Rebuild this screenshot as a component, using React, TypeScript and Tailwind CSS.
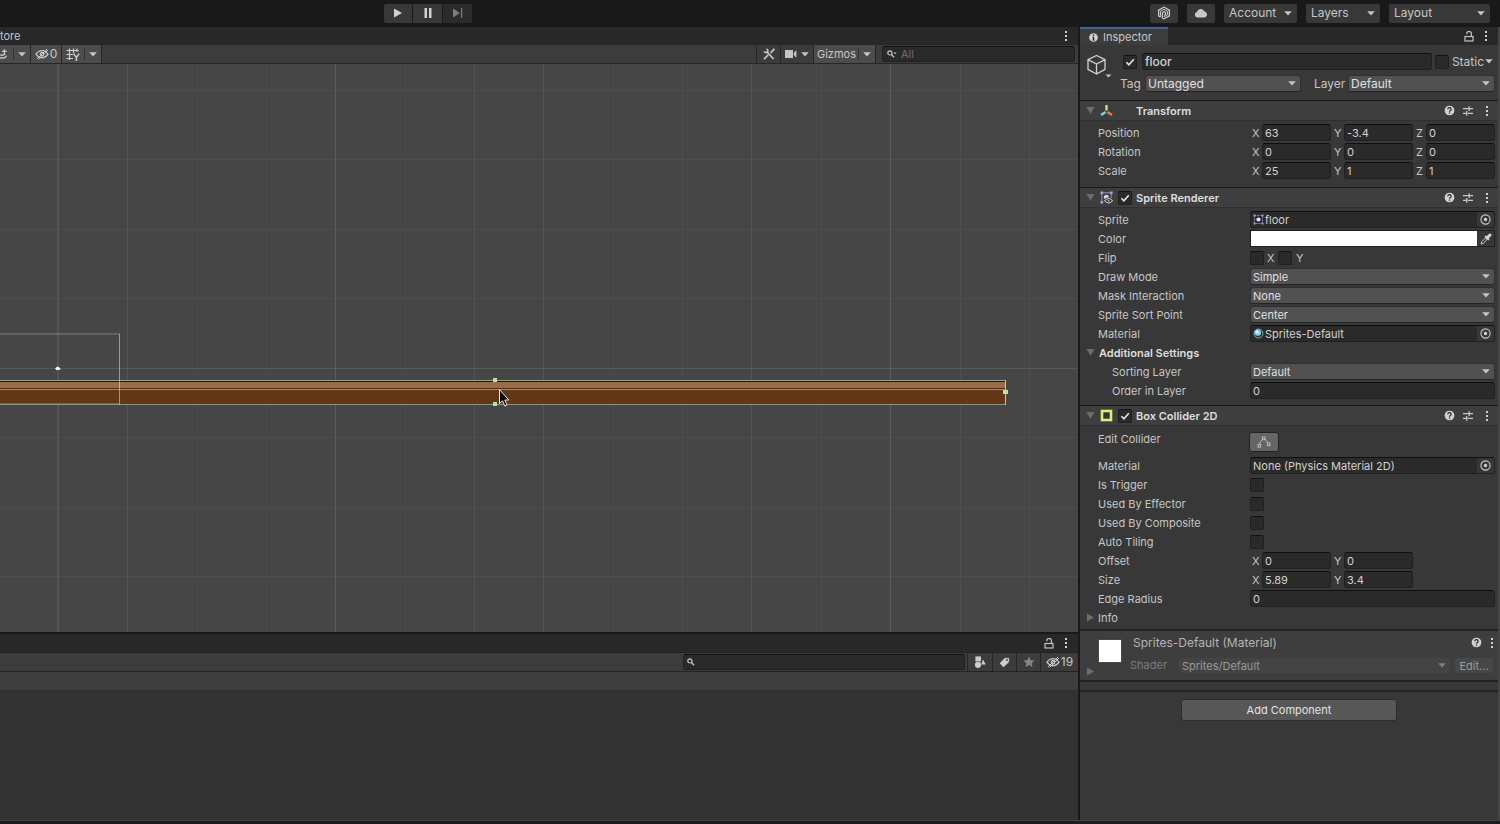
import { useId, type ReactNode } from "react";

/* ---------- icons ---------- */

function Caret({ className = "text-[#c4c4c4]" }: { className?: string }) {
  return (
    <svg viewBox="0 0 8 5" className={`h-[5px] w-2 shrink-0 ${className}`} aria-hidden="true">
      <path d="M0.2 0.2H7.8L4 4.6Z" fill="currentColor" />
    </svg>
  );
}

function Foldout({ open = true }: { open?: boolean }) {
  return (
    <svg viewBox="0 0 9 9" className="h-[9px] w-[9px] text-[#6c6c6c]" aria-hidden="true">
      <path d={open ? "M0.5 1H8.5L4.5 8Z" : "M1 0.5V8.5L8 4.5Z"} fill="currentColor" />
    </svg>
  );
}

function Kebab() {
  return (
    <svg viewBox="0 0 4 12" className="h-3 w-1 shrink-0" aria-hidden="true">
      <g fill="#d0d0d0">
        <rect x="1" y="1" width="2" height="2" />
        <rect x="1" y="5" width="2" height="2" />
        <rect x="1" y="9" width="2" height="2" />
      </g>
    </svg>
  );
}

function LockOpen() {
  return (
    <svg viewBox="0 0 10 11" className="h-[11px] w-[10px]" fill="none" stroke="#c4c4c4" aria-hidden="true">
      <rect x="1" y="5.5" width="8" height="4.5" strokeWidth="1.2" />
      <path d="M2.8 3.2V2.6A2.2 2.1 0 0 1 7.4 2.6V5.4" strokeWidth="1.2" />
    </svg>
  );
}

function Help() {
  return (
    <svg viewBox="0 0 12 12" className="h-[11px] w-[11px]" aria-hidden="true">
      <circle cx="6" cy="6" r="5.3" fill="#d2d2d2" />
      <path d="M4.2 4.8A1.8 1.7 0 1 1 6.9 6.1Q6 6.5 6 7.4" fill="none" stroke="#2f2f2f" strokeWidth="1.4" />
      <rect x="5.3" y="8.2" width="1.4" height="1.4" fill="#2f2f2f" />
    </svg>
  );
}

function Presets() {
  return (
    <svg viewBox="0 0 12 12" className="h-3 w-3" stroke="#c8c8c8" strokeWidth="1.3" fill="none" aria-hidden="true">
      <path d="M1 3.6H7M7.2 1.2V6M7.2 3.6H11M1 8.4H4.6M4.8 6V10.8M6 8.4H11" />
    </svg>
  );
}

function Target() {
  return (
    <svg viewBox="0 0 12 12" className="h-[11px] w-[11px]" aria-hidden="true">
      <circle cx="6" cy="6" r="5" fill="none" stroke="#c8c8c8" strokeWidth="1.2" />
      <circle cx="6" cy="6" r="1.8" fill="#d0d0d0" />
    </svg>
  );
}

function EyeSlash() {
  return (
    <svg viewBox="0 0 14 12" className="h-3 w-[14px]" fill="none" stroke="#c4c4c4" strokeWidth="1.3" aria-hidden="true">
      <path d="M1 6.2Q3.5 2.6 7 2.6T13 6.2Q10.5 9.8 7 9.8T1 6.2Z" />
      <circle cx="7" cy="6.2" r="1.7" />
      <path d="M2 11L12 1M3.6 11.4L13 2" strokeWidth="1" />
    </svg>
  );
}

function Magnifier({ menu = false }: { menu?: boolean }) {
  return (
    <svg viewBox="0 0 10 8" className="h-2 w-[10px] shrink-0" fill="none" stroke="#c8c8c8" aria-hidden="true">
      <circle cx="2.9" cy="2.9" r="2.1" strokeWidth="1.2" />
      <path d="M4.5 4.5L7 7.2" strokeWidth="1.4" />
      {menu && <path d="M6.6 2.4H9.6L8.1 4.2Z" fill="#c8c8c8" stroke="none" />}
    </svg>
  );
}

/* ---------- controls ---------- */

const fieldBase =
  "h-[17px] min-w-0 rounded-[3px] border border-[#202020] border-t-[#0f0f0f] bg-[#2a2a2a] text-[#d2d2d2] outline-none";

function TextField({ value, label, id, className = "" }: { value: string; label?: string; id?: string; className?: string }) {
  return <input id={id} type="text" aria-label={label} defaultValue={value} className={`${fieldBase} px-[2px] ${className}`} />;
}

function Tick({ label, id, checked = false }: { label?: string; id?: string; checked?: boolean }) {
  return (
    <span className="grid h-[14px] w-[14px] shrink-0">
      <input
        id={id}
        type="checkbox"
        aria-label={label}
        defaultChecked={checked}
        className="peer col-start-1 row-start-1 h-[14px] w-[14px] appearance-none rounded-[2px] border border-[#202020] border-t-[#121212] bg-[#2a2a2a]"
      />
      <svg
        viewBox="0 0 14 14"
        className="pointer-events-none invisible col-start-1 row-start-1 h-[14px] w-[14px] peer-checked:visible"
        aria-hidden="true"
      >
        <path d="M3.4 7.2L5.9 9.8L10.8 4.2" fill="none" stroke="#e6e6e6" strokeWidth="1.6" />
      </svg>
    </span>
  );
}

function Dropdown({ value, id, label, className = "" }: { value: string; id?: string; label?: string; className?: string }) {
  return (
    <span className={`grid h-[17px] min-w-0 items-center ${className}`}>
      <select
        id={id}
        aria-label={label}
        defaultValue={value}
        className="col-start-1 row-start-1 h-[17px] w-full appearance-none rounded-[3px] border border-[#303030] border-b-[#242424] bg-[#515151] pr-4 pl-[2px] text-[#e0e0e0] outline-none"
      >
        <option>{value}</option>
      </select>
      <span className="pointer-events-none col-start-1 row-start-1 justify-self-end pr-[5px]">
        <Caret />
      </span>
    </span>
  );
}

function ObjectField({ value, icon, id }: { value: string; icon?: ReactNode; id: string }) {
  return (
    <div className={`${fieldBase} flex flex-1 items-center overflow-hidden`}>
      <button id={id} type="button" className="flex min-w-0 flex-1 items-center gap-px pl-[2px] text-left">
        {icon}
        {value}
      </button>
      <button type="button" aria-label="Select object" className="flex h-full w-[17px] items-center justify-center bg-[#373737]">
        <Target />
      </button>
    </div>
  );
}

/* ---------- inspector rows ---------- */

function Row({ label, indent = false, children }: { label: string; indent?: boolean; children: (id: string) => ReactNode }) {
  const id = useId();
  return (
    <div className="flex h-[19px] items-center pr-[3px] pl-[18px]">
      <label htmlFor={id} className={`w-[152px] shrink-0 ${indent ? "pl-[14px]" : ""}`}>
        {label}
      </label>
      {children(id)}
    </div>
  );
}

function VectorRow({ label, values }: { label: string; values: string[] }) {
  return (
    <Row label={label}>
      {(id) => (
        <div className="grid flex-1 grid-cols-3 gap-x-px">
          {values.map((v, i) => (
            <span key={i} className="flex items-center">
              <label htmlFor={i === 0 ? id : `${id}${i}`} className="w-3 shrink-0 pl-[2px]">
                {"XYZ"[i]}
              </label>
              <TextField id={i === 0 ? id : `${id}${i}`} label={`${label} ${"XYZ"[i]}`} value={v} className="flex-1" />
            </span>
          ))}
        </div>
      )}
    </Row>
  );
}

function SectionHeader({ title, icon, toggle = false }: { title: string; icon: ReactNode; toggle?: boolean }) {
  return (
    <header className="flex h-[21px] items-center border-t border-b border-t-[#1a1a1a] border-b-[#303030] bg-[#3e3e3e] pl-[6px]">
      <button type="button" aria-label={`Collapse ${title}`} className="w-[14px]">
        <Foldout />
      </button>
      <span className="flex w-[18px] items-center">{icon}</span>
      <span className="w-[18px]">{toggle && <Tick checked label={`Enable ${title}`} />}</span>
      <h2 className="flex-1 font-semibold text-[#dedede]">{title}</h2>
      <div className="flex items-center gap-[7px] pr-[9px]">
        <button type="button" aria-label="Help">
          <Help />
        </button>
        <button type="button" aria-label="Presets">
          <Presets />
        </button>
        <button type="button" aria-label="More" className="pl-1">
          <Kebab />
        </button>
      </div>
    </header>
  );
}

/* ---------- component icons ---------- */

const transformIcon = (
  <svg viewBox="0 0 13 13" className="h-[13px] w-[13px]" fill="none" strokeWidth="2" aria-hidden="true">
    <path d="M6.5 1V6.5" stroke="#c8e668" strokeWidth="2.4" />
    <path d="M5.6 8L1 11" stroke="#7ad0ee" strokeWidth="2.6" />
    <path d="M7.4 8L12 11" stroke="#ee7848" strokeWidth="2.6" />
  </svg>
);

const spriteRendererIcon = (
  <svg viewBox="0 0 13 13" className="h-[13px] w-[13px]" aria-hidden="true">
    <path d="M1.8 11V1.8H11.2V7" fill="none" stroke="#a08ccc" />
    <g fill="#b49ce8">
      <rect x="0.5" y="0.5" width="2.6" height="2.6" />
      <rect x="10" y="0.5" width="2.6" height="2.6" />
      <rect x="0.5" y="10" width="2.6" height="2.6" />
    </g>
    <path d="M4.4 8A2.6 2.6 0 1 1 9 6.2Q6 6.2 4.4 8Z" fill="#dcdcdc" />
    <path d="M4.6 9.8Q6.4 7.6 8.6 7.6T12.6 9.8Q10.8 12 8.6 12T4.6 9.8Z" fill="#3e3e3e" stroke="#dcdcdc" />
    <circle cx="8.6" cy="9.8" r="0.8" fill="#dcdcdc" />
  </svg>
);

const colliderIcon = (
  <svg viewBox="0 0 13 13" className="h-[13px] w-[13px]" aria-hidden="true">
    <rect x="2" y="2" width="9" height="9" fill="#353535" stroke="#d0f474" strokeWidth="2.6" />
  </svg>
);

const spriteIcon = (
  <svg viewBox="0 0 11 11" className="h-[11px] w-[11px] shrink-0" aria-hidden="true">
    <rect x="1.5" y="1.5" width="8" height="8" fill="none" stroke="#8c7cc0" strokeDasharray="2 1" />
    <g fill="#a894e0">
      <rect x="0.5" y="0.5" width="2" height="2" />
      <rect x="8.5" y="0.5" width="2" height="2" />
      <rect x="0.5" y="8.5" width="2" height="2" />
      <rect x="8.5" y="8.5" width="2" height="2" />
    </g>
    <circle cx="5.5" cy="5.5" r="2.1" fill="#e6e6e6" />
  </svg>
);

const materialIcon = (
  <svg viewBox="0 0 11 11" className="h-[11px] w-[11px] shrink-0" aria-hidden="true">
    <circle cx="5.5" cy="5.5" r="4.5" fill="#1f3c48" stroke="#8fc8dc" strokeWidth="0.8" />
    <circle cx="4.8" cy="4.6" r="3.2" fill="#90d0ee" />
    <circle cx="4" cy="3.8" r="1.4" fill="#e4f6fc" />
  </svg>
);

/* ---------- top bar ---------- */

function TopMenu({ label, className }: { label: string; className: string }) {
  return (
    <button type="button" className={`flex h-[19px] items-center justify-between rounded-[2px] bg-[#383838] px-[5px] ${className}`}>
      {label}
      <Caret />
    </button>
  );
}

function TopBar() {
  return (
    <header className="flex h-[26px] shrink-0 items-center justify-between bg-[#191919] pr-[10px] pl-[384px] text-[12px]">
      <div className="flex gap-px">
        <button type="button" aria-label="Play" className="flex h-[19px] w-[28px] items-center justify-center rounded-l-[2px] bg-[#383838]">
          <svg viewBox="0 0 10 10" className="h-[10px] w-[10px]" aria-hidden="true">
            <path d="M1 0.5L9 5L1 9.5Z" fill="#d2d2d2" />
          </svg>
        </button>
        <button type="button" aria-label="Pause" className="flex h-[19px] w-[29px] items-center justify-center bg-[#383838]">
          <svg viewBox="0 0 8 10" className="h-[10px] w-2" aria-hidden="true">
            <path d="M0.5 0H3V10H0.5ZM5 0H7.5V10H5Z" fill="#d2d2d2" />
          </svg>
        </button>
        <button type="button" aria-label="Step" className="flex h-[19px] w-[29px] items-center justify-center rounded-r-[2px] bg-[#2b2b2b]">
          <svg viewBox="0 0 11 10" className="h-[10px] w-[11px]" aria-hidden="true">
            <path d="M1 0.5L8 5L1 9.5ZM9 0H10.2V10H9Z" fill="#7c7c7c" />
          </svg>
        </button>
      </div>
      <div className="flex gap-[9px]">
        <button type="button" aria-label="Collaborate" className="flex h-[19px] w-[28px] items-center justify-center rounded-[2px] bg-[#383838]">
          <svg viewBox="0 0 14 14" className="h-[14px] w-[14px]" fill="none" stroke="#d0d0d0" strokeWidth="1.2" aria-hidden="true">
            <path d="M3.4 11L1.6 10V4.2L7 1.1L12.4 4.2V9.8L7 12.9L5.4 12V6.6L7 5.7L8.6 6.6V8.4L7 9.3" />
            <path d="M3.4 11V5.3L7 3.3L10.6 5.3V8.8L7 10.9" strokeWidth="1" />
          </svg>
        </button>
        <button type="button" aria-label="Services" className="flex h-[19px] w-[28px] items-center justify-center rounded-[2px] bg-[#383838]">
          <svg viewBox="0 0 14 10" className="h-[10px] w-[14px]" aria-hidden="true">
            <path d="M3.3 9.6A2.9 2.9 0 0 1 2.8 4A4 4 0 0 1 10.2 3.2A3.3 3.3 0 0 1 10.8 9.6Z" fill="#c8c8c8" />
          </svg>
        </button>
        <TopMenu label="Account" className="w-[73px]" />
        <TopMenu label="Layers" className="w-[74px]" />
        <TopMenu label="Layout" className="w-[101px]" />
      </div>
    </header>
  );
}

/* ---------- scene ---------- */

const gridX = [
  { x: 57, o: 0.08, w: 2 },
  { x: 127, o: 0.08, w: 1 },
  { x: 197, o: 0.03, w: 1 },
  { x: 266, o: 0.03, w: 1 },
  { x: 335, o: 0.12, w: 1 },
  { x: 405, o: 0.03, w: 1 },
  { x: 474, o: 0.08, w: 1 },
  { x: 543, o: 0.08, w: 1 },
  { x: 613, o: 0.03, w: 1 },
  { x: 682, o: 0.04, w: 1 },
  { x: 751, o: 0.08, w: 1 },
  { x: 821, o: 0.04, w: 1 },
  { x: 890, o: 0.12, w: 1 },
  { x: 960, o: 0.06, w: 1 },
  { x: 1029, o: 0.04, w: 1 },
];
const gridY = [26, 95, 165, 234, 304, 373, 443, 512];

function SceneView() {
  return (
    <div className="flex min-h-[400px] flex-1 bg-[#464646]">
      <svg className="block min-w-0 flex-1" role="img" aria-label="Scene view">
        {gridX.map((g) => (
          <rect key={g.x} x={g.x} y="0" width={g.w} height="100%" fill="#fff" opacity={g.o} />
        ))}
        {gridY.map((y) => (
          <rect key={y} x="0" y={y} width="100%" height="1" fill="#fff" opacity={y === 304 ? 0.1 : 0.04} />
        ))}
        <rect x="0" y="316" width="1006" height="24" fill="#633616" />
        <rect x="0" y="316" width="1006" height="1" fill="#90ae7c" />
        <rect x="0" y="317" width="1005" height="1" fill="#1c130c" />
        <rect x="0" y="318" width="1005" height="6" fill="#986d4a" />
        <rect x="0" y="324" width="1005" height="1" fill="#4e2810" />
        <rect x="0" y="325" width="1005" height="1" fill="#b08a58" />
        <rect x="0" y="340" width="1006" height="1" fill="#83978a" />
        <rect x="1005" y="316" width="1" height="25" fill="#c8c8b8" />
        <rect x="0" y="269" width="120" height="2" fill="#fff" opacity="0.16" />
        <rect x="119" y="270" width="1" height="71" fill="#fff" opacity="0.45" />
        <rect x="0" y="339" width="120" height="1" fill="#a08860" opacity="0.5" />
        <path d="M55 304.6L57.6 302.6L60.6 304.6L59.4 306H56.6Z" fill="#fff" />
        <g fill="#b4e69a">
          <rect x="493" y="314" width="4" height="4" />
          <rect x="493" y="338" width="4" height="4" />
          <rect x="1003" y="326" width="5" height="4" />
        </g>
        <path
          d="M499.5 325.5V339.5L502.5 336.8L504.8 342L507 341L504.8 336H508.8Z"
          fill="#0a0a0a"
          stroke="#e6e6e6"
          strokeWidth="1"
        />
      </svg>
    </div>
  );
}

function SceneToolbar() {
  return (
    <div className="flex h-[20px] shrink-0 items-stretch justify-between border-t border-b border-[#262626] bg-[#3c3c3c]">
      <div className="flex gap-px bg-[#262626] pr-px">
        <button type="button" aria-label="Audio and effects" className="flex w-[30px] items-center justify-between bg-[#4c4c4c] pr-1">
          <svg viewBox="0 0 8 12" className="h-3 w-2" fill="none" stroke="#c8c8c8" strokeWidth="1.4" aria-hidden="true">
            <path d="M0 9.8Q5.6 10.8 6.4 7.6M0 6.8Q3 8 5 6M4.4 1.2V6M2 3.4H6.8" />
          </svg>
          <span className="flex h-3 items-center border-l border-[#333] pl-1">
            <Caret />
          </span>
        </button>
        <button type="button" aria-label="Hidden objects: 0" className="flex w-[30px] items-center justify-center gap-px bg-[#4c4c4c] text-[12px]">
          <EyeSlash />0
        </button>
        <button type="button" aria-label="Grid visibility" className="flex w-[39px] items-center justify-between bg-[#4c4c4c] pr-1 pl-1">
          <svg viewBox="0 0 14 13" className="h-[13px] w-[14px]" fill="none" stroke="#cccccc" strokeWidth="1.2" aria-hidden="true">
            <path d="M0.5 2.5H12.5M0.5 6.5H7M0.5 10.5H7M3.5 0.5V12M7.5 0.5V5M11 0.5V4" />
            <path d="M7.6 5.6L10.4 9.4L13.2 5.6M10.4 9.4V13" strokeWidth="1.5" />
          </svg>
          <span className="flex h-3 items-center border-l border-[#333] pl-1">
            <Caret />
          </span>
        </button>
      </div>
      <div className="flex items-stretch">
        <button type="button" aria-label="Component tools" className="flex w-6 items-center justify-center border-l border-[#262626]">
          <svg viewBox="0 0 12 12" className="h-3 w-3" fill="none" stroke="#c8c8c8" aria-hidden="true">
            <path d="M3.4 3.4L10.6 11" strokeWidth="1.8" />
            <path d="M1 3.4A2.4 2.4 0 0 0 4.8 3.8A2.4 2.4 0 0 0 3.4 0.8" strokeWidth="1.4" />
            <path d="M11.4 0.8L7.6 4.8M5 7L1 11.2" strokeWidth="1.8" />
          </svg>
        </button>
        <button type="button" aria-label="Camera" className="flex w-[33px] items-center justify-center gap-1 border-l border-[#262626]">
          <svg viewBox="0 0 12 10" className="h-[10px] w-3" aria-hidden="true">
            <path d="M0 1H8V9H0ZM8.8 4L11.4 1.2V8.8L8.8 6Z" fill="#c4c4c4" />
          </svg>
          <Caret />
        </button>
        <button type="button" className="flex w-[63px] items-center justify-between border-r border-l border-[#262626] bg-[#4c4c4c] pr-1 pl-[3px]">
          Gizmos
          <span className="flex h-3 items-center border-l border-[#333] pl-1">
            <Caret />
          </span>
        </button>
        <label className="my-px mr-[3px] ml-[6px] flex w-[193px] items-center rounded-[3px] border border-[#202020] border-t-[#0f0f0f] bg-[#2a2a2a] pl-1">
          <Magnifier menu />
          <input type="search" aria-label="Search scene" placeholder="All" className="min-w-0 flex-1 bg-transparent pl-1 outline-none placeholder:text-[#6e6e6e]" />
        </label>
      </div>
    </div>
  );
}

function ProjectPanel() {
  return (
    <section aria-label="Project" className="flex h-[188px] shrink-0 flex-col border-t-2 border-[#191919] bg-[#333333]">
      <div className="flex h-[18px] shrink-0 items-center justify-end gap-[10px] bg-[#282828] pr-[10px]">
        <button type="button" aria-label="Lock">
          <LockOpen />
        </button>
        <button type="button" aria-label="More">
          <Kebab />
        </button>
      </div>
      <div className="flex h-[20px] shrink-0 justify-end border-t border-b border-[#232323] bg-[#3c3c3c]">
        <label className="my-px mr-[2px] flex w-[282px] items-center rounded-[3px] border border-[#202020] border-t-[#0f0f0f] bg-[#2a2a2a] pl-[3px]">
          <Magnifier />
          <input type="search" aria-label="Search project" className="min-w-0 flex-1 bg-transparent outline-none" />
        </label>
        <button type="button" aria-label="Search by type" className="flex w-[25px] items-center justify-center border-l border-[#262626]">
          <svg viewBox="0 0 12 12" className="h-3 w-3" fill="#cccccc" aria-hidden="true">
            <rect x="1.4" y="0.4" width="5.6" height="5" />
            <circle cx="4" cy="8.8" r="3.1" />
            <path d="M9 3.4L11.8 8.4H7.2Z" />
          </svg>
        </button>
        <button type="button" aria-label="Search by label" className="flex w-6 items-center justify-center border-l border-[#262626]">
          <svg viewBox="0 0 11 11" className="h-[11px] w-[11px]" aria-hidden="true">
            <path d="M6 1.4H9.6V5L4.4 9.8L1.2 6.2Z" fill="#d0d0d0" stroke="#d0d0d0" strokeLinejoin="round" />
            <circle cx="8" cy="3" r="0.9" fill="#3c3c3c" />
          </svg>
        </button>
        <button type="button" aria-label="Favorites" className="flex w-6 items-center justify-center border-l border-[#262626]">
          <svg viewBox="0 0 12 12" className="h-3 w-3" aria-hidden="true">
            <path d="M6 0.5L7.6 4.3L11.7 4.6L8.6 7.2L9.6 11.2L6 9L2.4 11.2L3.4 7.2L0.3 4.6L4.4 4.3Z" fill="#858585" />
          </svg>
        </button>
        <button type="button" aria-label="Hidden packages: 19" className="flex w-[38px] items-center justify-center gap-px border-l border-[#262626] text-[12px]">
          <EyeSlash />
          19
        </button>
      </div>
      <div className="h-[19px] shrink-0 border-b border-[#2c2c2c] bg-[#3e3e3e]" />
    </section>
  );
}

/* ---------- inspector ---------- */

function ObjectHeader() {
  return (
    <div className="flex h-[55px] gap-2 pt-2 pr-[3px] pl-[6px] text-[12px]">
      <button type="button" aria-label="Object icon" className="flex h-[26px] w-[26px] items-end">
        <svg viewBox="0 0 26 26" className="h-[26px] w-[26px]" fill="none" stroke="#d2d2d2" strokeWidth="1.3" strokeLinejoin="round" aria-hidden="true">
          <path d="M10.5 2.5L19 6.6V16.4L10.5 21L2 16.4V6.6ZM2 6.6L10.5 11L19 6.6M10.5 11V21" />
          <path d="M19.5 21.4H25.5L22.5 24.4Z" fill="#c4c4c4" stroke="none" />
        </svg>
      </button>
      <div className="flex min-w-0 flex-1 flex-col gap-[5px]">
        <div className="flex items-center pr-[2px] pl-[3px]">
          <Tick checked label="Active" />
          <TextField value="floor" label="Name" className="mr-[3px] ml-[5px] flex-1 font-medium" />
          <label className="flex items-center gap-[3px]">
            <Tick />
            Static
          </label>
          <button type="button" aria-label="Static options" className="pl-px">
            <Caret />
          </button>
        </div>
        <div className="flex items-center">
          <label htmlFor="tag" className="w-[25px] shrink-0">
            Tag
          </label>
          <Dropdown id="tag" value="Untagged" className="flex-[156]" />
          <label htmlFor="layer" className="w-[47px] shrink-0 pl-[13px]">
            Layer
          </label>
          <Dropdown id="layer" value="Default" className="flex-[147]" />
        </div>
      </div>
    </div>
  );
}

function Inspector() {
  return (
    <aside className="flex w-[420px] shrink-0 flex-col border-r-2 border-[#454545] bg-[#383838]">
      <div className="flex h-[18px] items-stretch justify-between bg-[#282828]">
        <button type="button" className="flex w-[88px] items-center gap-[5px] border-t-2 border-[#3d6597] bg-[#3c3c3c] pl-[9px]">
          <svg viewBox="0 0 10 10" className="h-[9px] w-[9px]" aria-hidden="true">
            <circle cx="5" cy="5" r="4.8" fill="#d2d2d2" />
            <path d="M4.2 1.8H5.8V3.2H4.2ZM3.8 4.2H5.8V7.4H6.4V8.2H3.6V7.4H4.2V5H3.8Z" fill="#2c2c2c" />
          </svg>
          Inspector
        </button>
        <div className="flex items-center gap-[10px] pr-[10px]">
          <button type="button" aria-label="Lock">
            <LockOpen />
          </button>
          <button type="button" aria-label="More">
            <Kebab />
          </button>
        </div>
      </div>

      <ObjectHeader />

      <section>
        <SectionHeader title="Transform" icon={transformIcon} />
        <div className="pt-[2px] pb-[7px]">
          <VectorRow label="Position" values={["63", "-3.4", "0"]} />
          <VectorRow label="Rotation" values={["0", "0", "0"]} />
          <VectorRow label="Scale" values={["25", "1", "1"]} />
        </div>
      </section>

      <section>
        <SectionHeader title="Sprite Renderer" icon={spriteRendererIcon} toggle />
        <div className="pt-[2px] pb-[5px]">
          <Row label="Sprite">{(id) => <ObjectField id={id} value="floor" icon={spriteIcon} />}</Row>
          <Row label="Color">
            {(id) => (
              <div className="flex h-[17px] flex-1 border border-[#202020]">
                <button id={id} type="button" className="flex-1 bg-white" />
                <button type="button" aria-label="Pick color" className="flex w-[17px] items-center justify-center">
                  <svg viewBox="0 0 12 12" className="h-3 w-3" aria-hidden="true">
                    <path d="M1 11L1.8 8.6L6 4.4L7.6 6L3.4 10.2Z" fill="none" stroke="#c8c8c8" />
                    <path d="M5.2 3L9 6.8" stroke="#d4d4d4" strokeWidth="1.8" />
                    <path d="M7 5L10 2" stroke="#d4d4d4" strokeWidth="3" strokeLinecap="round" />
                  </svg>
                </button>
              </div>
            )}
          </Row>
          <Row label="Flip">
            {(id) => (
              <div className="flex items-center">
                <Tick id={id} label="Flip X" />
                <span className="w-[14px] pl-[3px]">X</span>
                <Tick label="Flip Y" />
                <span className="pl-1">Y</span>
              </div>
            )}
          </Row>
          <Row label="Draw Mode">{(id) => <Dropdown id={id} value="Simple" className="flex-1" />}</Row>
          <Row label="Mask Interaction">{(id) => <Dropdown id={id} value="None" className="flex-1" />}</Row>
          <Row label="Sprite Sort Point">{(id) => <Dropdown id={id} value="Center" className="flex-1" />}</Row>
          <Row label="Material">{(id) => <ObjectField id={id} value="Sprites-Default" icon={materialIcon} />}</Row>
          <button type="button" className="flex h-[19px] items-center gap-1 pl-[6px] font-semibold text-[#dedede]">
            <Foldout />
            Additional Settings
          </button>
          <Row label="Sorting Layer" indent>
            {(id) => <Dropdown id={id} value="Default" className="flex-1" />}
          </Row>
          <Row label="Order in Layer" indent>
            {(id) => <TextField id={id} value="0" className="flex-1" />}
          </Row>
        </div>
      </section>

      <section>
        <SectionHeader title="Box Collider 2D" icon={colliderIcon} toggle />
        <div className="pt-[3px] pb-[2px]">
          <div className="flex h-[27px] pt-px pl-[18px]">
            <label htmlFor="edit-collider" className="w-[151px] pt-px">
              Edit Collider
            </label>
            <button
              id="edit-collider"
              type="button"
              className="mt-[2px] flex h-5 w-[30px] items-center justify-center rounded-[3px] border border-[#222222] bg-[#656565]"
            >
              <svg viewBox="0 0 14 12" className="h-3 w-[14px]" fill="none" stroke="#bcbcbc" aria-hidden="true">
                <rect x="1" y="8.5" width="2.6" height="2.6" />
                <rect x="5.4" y="1" width="2.6" height="2.6" />
                <rect x="10.4" y="7" width="2.6" height="2.6" />
                <path d="M2.4 8.4Q3 5 5.6 3.4M7.8 3L11.4 7" />
              </svg>
            </button>
          </div>
          <Row label="Material">{(id) => <ObjectField id={id} value="None (Physics Material 2D)" />}</Row>
          <Row label="Is Trigger">{(id) => <Tick id={id} />}</Row>
          <Row label="Used By Effector">{(id) => <Tick id={id} />}</Row>
          <Row label="Used By Composite">{(id) => <Tick id={id} />}</Row>
          <Row label="Auto Tiling">{(id) => <Tick id={id} />}</Row>
          <VectorRow label="Offset" values={["0", "0"]} />
          <VectorRow label="Size" values={["5.89", "3.4"]} />
          <Row label="Edge Radius">{(id) => <TextField id={id} value="0" className="flex-1" />}</Row>
          <button type="button" className="flex h-[19px] items-center gap-[3px] pl-[6px]">
            <Foldout open={false} />
            Info
          </button>
        </div>
      </section>

      <section className="flex h-[53px] items-stretch border-t-2 border-b-2 border-[#222222] bg-[#3e3e3e] pl-[6px]">
        <button type="button" aria-label="Expand material" className="flex w-3 items-end pb-1">
          <Foldout open={false} />
        </button>
        <div className="mt-2 h-6 w-6 border border-[#4a4a4a] bg-white" />
        <div className="flex min-w-0 flex-1 flex-col gap-[6px] pt-[3px] pl-2">
          <div className="flex h-[17px] items-center pr-1">
            <h2 className="flex-1 pl-[3px] text-[12px] text-[#b4b4b4]">Sprites-Default (Material)</h2>
            <button type="button" aria-label="Help">
              <Help />
            </button>
            <button type="button" aria-label="More" className="pl-2">
              <Kebab />
            </button>
          </div>
          <div className="flex items-center pr-[5px] text-[#7c7c7c]">
            <label htmlFor="shader" className="w-[49px] shrink-0">
              Shader
            </label>
            <span className="grid h-[15px] min-w-0 flex-1 items-center">
              <select
                id="shader"
                disabled
                className="col-start-1 row-start-1 h-[15px] w-full appearance-none rounded-[2px] bg-[#444444] pl-[3px] text-[#9a9a9a] opacity-100"
              >
                <option>Sprites/Default</option>
              </select>
              <span className="pointer-events-none col-start-1 row-start-1 justify-self-end pr-1">
                <Caret className="text-[#808080]" />
              </span>
            </span>
            <button type="button" disabled className="ml-[5px] h-[15px] w-[38px] rounded-[2px] bg-[#474747] text-[#9a9a9a]">
              Edit...
            </button>
          </div>
        </div>
      </section>

      <div className="mt-2 flex justify-center border-t-2 border-[#242424] pt-[7px]">
        <button type="button" className="h-[22px] w-[216px] rounded-[3px] border border-[#2c2c2c] bg-[#575757] text-[#e2e2e2]">
          Add Component
        </button>
      </div>
    </aside>
  );
}

export default function App() {
  return (
    <div className="flex min-h-screen flex-col border-b-[3px] border-[#1b1c21] bg-[#191919] font-['Inter',sans-serif] text-[11px] leading-4 text-[#c6c6c6]">
      <TopBar />
      <main className="flex flex-1 items-stretch border-b border-[#444444] pt-px">
        <div className="flex min-w-0 flex-1 flex-col border-r-2 border-[#191919]">
          <div className="flex h-[17px] shrink-0 items-center justify-between overflow-hidden bg-[#282828] pr-[10px]">
            <span>tore</span>
            <button type="button" aria-label="More">
              <Kebab />
            </button>
          </div>
          <SceneToolbar />
          <SceneView />
          <ProjectPanel />
        </div>
        <Inspector />
      </main>
    </div>
  );
}
